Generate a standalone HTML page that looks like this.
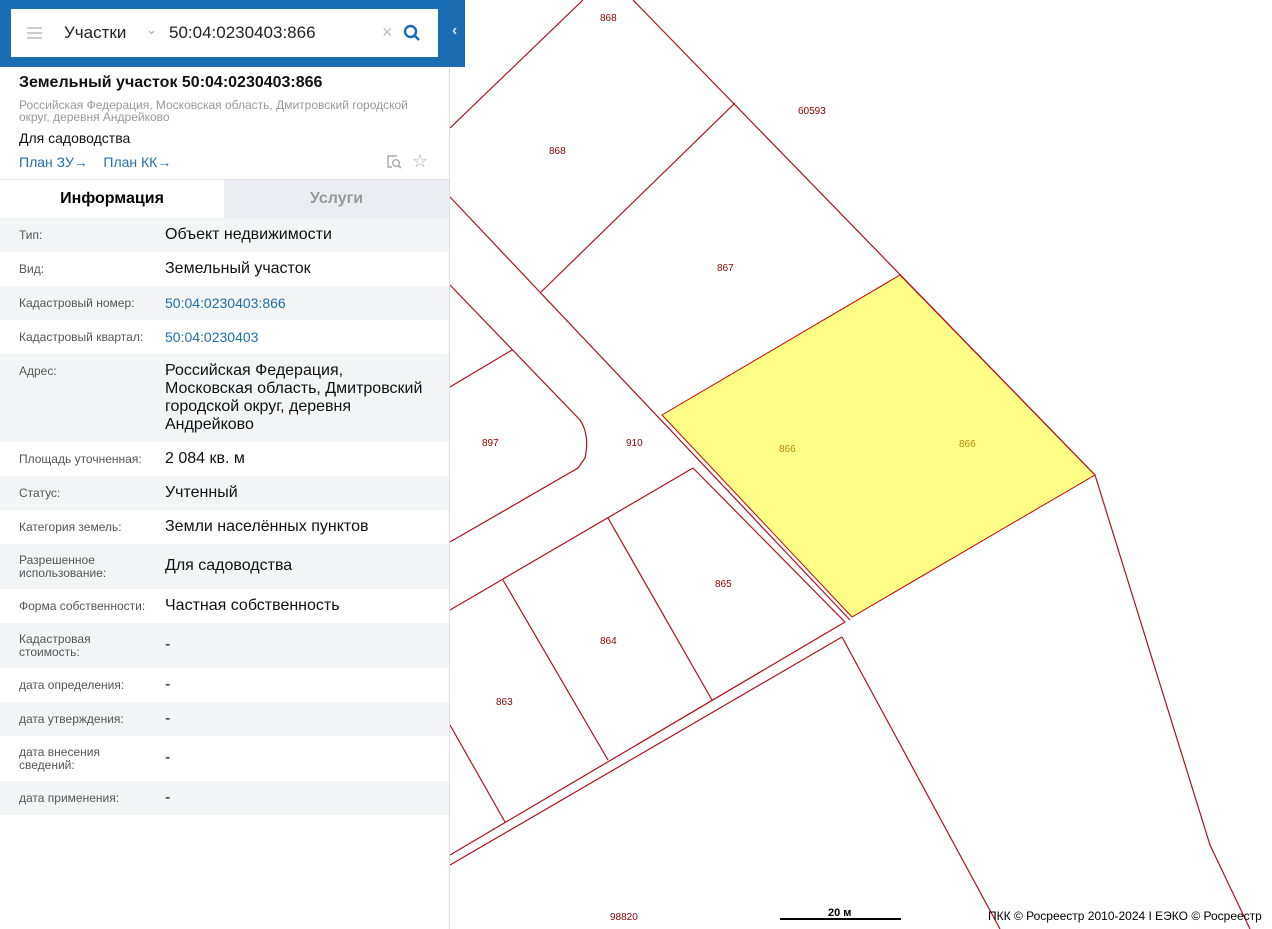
<!DOCTYPE html>
<html><head><meta charset="utf-8"><style>
*{margin:0;padding:0;box-sizing:border-box}
body{width:1272px;height:929px;overflow:hidden;background:#fff;font-family:"Liberation Sans",sans-serif;position:relative}
#hdr{position:absolute;left:0;top:0;width:465px;height:67px;background:#1a6db3}
#sb{position:absolute;left:11px;top:9px;width:427px;height:48px;background:#fff}
#panel{position:absolute;left:0;top:67px;width:450px;height:862px;background:#fff;border-right:1px solid #ddd}
.row{position:absolute;left:0;width:449px;font-size:16px;color:#111}
.row.g{background:#f4f5f7}
.row .k{position:absolute;left:19px;font-size:12px;color:#555;line-height:13px}
.row .v{position:absolute;left:165px;line-height:18px}
.blue{color:#1f6fa8!important;font-size:14px}
svg text{font-family:"Liberation Sans",sans-serif;font-size:10px;fill:#8b0000}
</style></head><body>
<svg width="1272" height="929" style="position:absolute;left:0;top:0">
<polygon points="662,415 900,275 1095,475 852,617" fill="#ffff88" stroke="#c00" stroke-width="1"/>
<g stroke="#b0101a" stroke-width="1.2" fill="none">
<line x1="583" y1="0" x2="450" y2="128"/>
<line x1="633" y1="0" x2="1095" y2="475"/>
<line x1="735" y1="103" x2="541" y2="292"/>
<line x1="450" y1="197" x2="850" y2="620"/>
<line x1="512" y1="350" x2="450" y2="387"/>
<path d="M450,285 L580,420 Q590,435 585,458 L578,468 L450,542"/>
<line x1="693" y1="468" x2="450" y2="610"/>
<line x1="693" y1="468" x2="845" y2="622"/>
<line x1="608" y1="518" x2="712" y2="700"/>
<line x1="503" y1="580" x2="608" y2="760"/>
<line x1="845" y1="622" x2="450" y2="855"/>
<line x1="842" y1="637" x2="450" y2="865"/>
<line x1="450" y1="725" x2="505" y2="822"/>
<line x1="842" y1="637" x2="1000" y2="929"/>
<path d="M1095,475 L1210,845 L1250,929"/>
</g>
<text x="600" y="21">868</text><text x="798" y="114">60593</text><text x="549" y="154">868</text>
<text x="717" y="271">867</text><text x="482" y="446">897</text><text x="626" y="446">910</text>
<text x="779" y="452" style="fill:#b8860b">866</text><text x="959" y="447" style="fill:#b8860b">866</text>
<text x="715" y="587">865</text><text x="600" y="644">864</text><text x="496" y="705">863</text><text x="610" y="920">98820</text>
<line x1="780" y1="919" x2="901" y2="919" stroke="#000" stroke-width="2"/>
<text x="828" y="916" style="fill:#000;font-size:11px;font-weight:bold">20 м</text>
<text x="988" y="920" style="fill:#000;font-size:12px">ПКК © Росреестр 2010-2024 I ЕЭКО © Росреестр</text>
</svg>
<div id="hdr"><div id="sb">
<div style="position:absolute;left:16px;top:18px;width:15px;height:2px;background:#ccc;box-shadow:0 5px 0 #ccc,0 10px 0 #ccc"></div>
<div style="position:absolute;left:53px;top:14px;font-size:17px;color:#222">Участки</div>
<div style="position:absolute;left:135px;top:13px;font-size:13px;color:#aaa">⌄</div>
<div style="position:absolute;left:158px;top:14px;font-size:17px;color:#222">50:04:0230403:866</div>
<div style="position:absolute;left:371px;top:13px;font-size:18px;color:#bbb">×</div>
<svg style="position:absolute;left:392px;top:15px" width="18" height="18"><circle cx="7.5" cy="7.5" r="5.5" stroke="#1a6db3" stroke-width="2.4" fill="none"/><line x1="11.5" y1="11.5" x2="16" y2="16" stroke="#1a6db3" stroke-width="2.6"/></svg>
</div>
<div style="position:absolute;left:452px;top:22px;color:#cfe0f0;font-size:16px;font-weight:bold">‹</div></div>
<div id="panel">
<div style="position:absolute;left:19px;top:7px;font-size:16px;font-weight:bold;color:#111">Земельный участок 50:04:0230403:866</div>
<div style="position:absolute;left:19px;top:32px;width:420px;font-size:12px;line-height:12px;color:#999">Российская Федерация, Московская область, Дмитровский городской округ, деревня Андрейково</div>
<div style="position:absolute;left:19px;top:63px;font-size:14px;color:#111">Для садоводства</div>
<div style="position:absolute;left:19px;top:87px;font-size:14px;color:#1f6fa8">План ЗУ→ &nbsp;&nbsp;&nbsp;План КК→</div>
<svg style="position:absolute;left:386px;top:87px" width="18" height="16"><path d="M11,2 H2 V13 H6" stroke="#aaa" stroke-width="1.4" fill="none"/><circle cx="10" cy="9" r="3.3" stroke="#aaa" stroke-width="1.4" fill="none"/><line x1="12.5" y1="11.5" x2="15" y2="14" stroke="#aaa" stroke-width="1.6"/></svg>
<div style="position:absolute;left:412px;top:84px;font-size:18px;color:#aaa">☆</div>
<div style="position:absolute;left:0;top:112px;width:449px;border-top:1px solid #e4e4e4"></div>
<div style="position:absolute;left:0;top:113px;width:224px;height:38px;font-size:16px;font-weight:bold;text-align:center;line-height:38px">Информация</div>
<div style="position:absolute;left:224px;top:113px;width:225px;height:38px;background:#eaedf1;font-size:16px;font-weight:bold;color:#999;text-align:center;line-height:38px">Услуги</div>
</div>
<div class="row g" style="top:218px;height:34px"><span class="k" style="top:11px">Тип:</span><span class="v" style="top:8px">Объект недвижимости</span></div>
<div class="row" style="top:252px;height:34px"><span class="k" style="top:11px">Вид:</span><span class="v" style="top:8px">Земельный участок</span></div>
<div class="row g" style="top:286px;height:34px"><span class="k" style="top:11px">Кадастровый номер:</span><span class="v blue" style="top:8px">50:04:0230403:866</span></div>
<div class="row" style="top:320px;height:34px"><span class="k" style="top:11px">Кадастровый квартал:</span><span class="v blue" style="top:8px">50:04:0230403</span></div>
<div class="row g" style="top:354px;height:88px"><span class="k" style="top:11px">Адрес:</span><span class="v" style="top:8px;width:268px">Российская Федерация, Московская область, Дмитровский городской округ, деревня Андрейково</span></div>
<div class="row" style="top:442px;height:34px"><span class="k" style="top:11px">Площадь уточненная:</span><span class="v" style="top:8px">2 084 кв. м</span></div>
<div class="row g" style="top:476px;height:34px"><span class="k" style="top:11px">Статус:</span><span class="v" style="top:8px">Учтенный</span></div>
<div class="row" style="top:510px;height:34px"><span class="k" style="top:11px">Категория земель:</span><span class="v" style="top:8px">Земли населённых пунктов</span></div>
<div class="row g" style="top:544px;height:45px"><span class="k" style="top:10px">Разрешенное<br>использование:</span><span class="v" style="top:13px">Для садоводства</span></div>
<div class="row" style="top:589px;height:34px"><span class="k" style="top:11px">Форма собственности:</span><span class="v" style="top:8px">Частная собственность</span></div>
<div class="row g" style="top:623px;height:45px"><span class="k" style="top:10px">Кадастровая<br>стоимость:</span><span class="v" style="top:13px">-</span></div>
<div class="row" style="top:668px;height:34px"><span class="k" style="top:11px">дата определения:</span><span class="v" style="top:8px">-</span></div>
<div class="row g" style="top:702px;height:34px"><span class="k" style="top:11px">дата утверждения:</span><span class="v" style="top:8px">-</span></div>
<div class="row" style="top:736px;height:45px"><span class="k" style="top:10px">дата внесения<br>сведений:</span><span class="v" style="top:13px">-</span></div>
<div class="row g" style="top:781px;height:34px"><span class="k" style="top:11px">дата применения:</span><span class="v" style="top:8px">-</span></div>
</body></html>
